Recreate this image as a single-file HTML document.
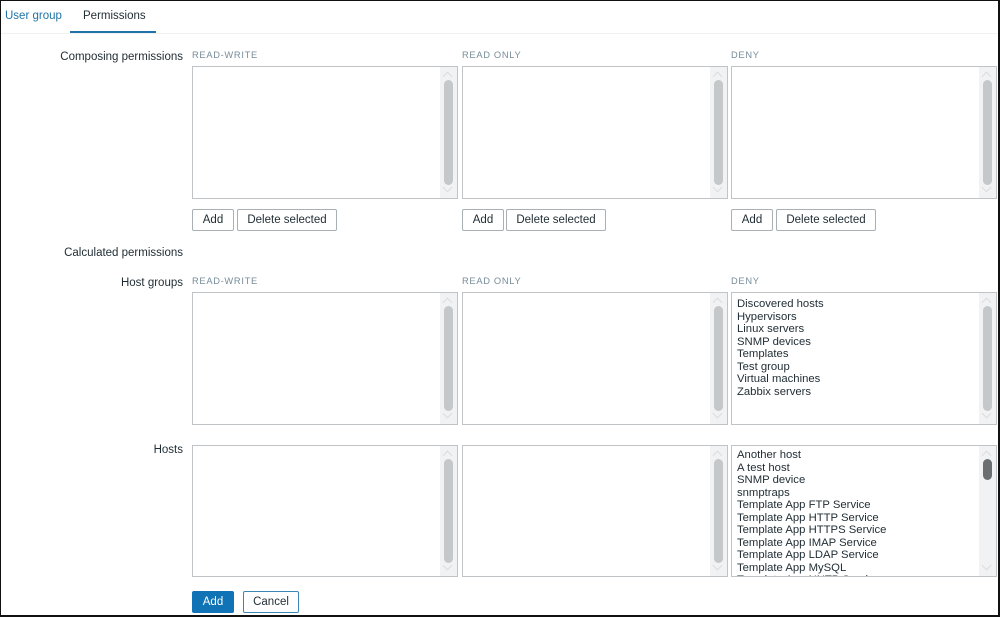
<!DOCTYPE html>
<html><head><meta charset="utf-8"><style>
*{box-sizing:border-box;margin:0;padding:0}
body{width:1000px;height:617px;background:#fff;font-family:"Liberation Sans",sans-serif;font-size:11.5px;color:#1f2c33;position:relative;overflow:hidden}
.frame{position:absolute;left:0;top:0;width:1000px;height:617px;border:1px solid #111;border-right:2px solid #111;border-bottom:2px solid #111}
.a{position:absolute}
.tab{top:10px;font-size:11.5px}
.lbl{right:817px;text-align:right;white-space:nowrap}
.hd{font-size:9.3px;color:#768d99;letter-spacing:.7px}
.box{position:absolute;width:266px;height:133px;border:1px solid #c0c4c7;background:#fff}
.box .tr{position:absolute;right:0;top:0;width:17px;height:100%;background:#f1f2f3}
.box .th{position:absolute;left:4px;top:13px;width:9px;bottom:13px;background:#c4c8cb;border-radius:5px}
.box .up,.box .dn{position:absolute;left:4px;width:7px;height:7px;border-left:1px solid #dadcde;border-top:1px solid #dadcde;transform:rotate(45deg)}
.box .up{top:6px}.box .dn{bottom:7px;transform:rotate(225deg)}
.box .items{position:absolute;left:5px;top:5px;line-height:12.5px;font-size:11.3px;color:#1f2c33;white-space:nowrap}
.btn{position:absolute;height:22px;border:1px solid #a9b0b4;border-radius:2px;background:#fff;font-size:11.5px;line-height:21px;text-align:center;color:#1f2c33}
</style></head><body>
<div class="a tab" style="left:5px;color:#1f73a8">User group</div>
<div class="a tab" style="left:83px">Permissions</div>
<div class="a" style="left:70px;top:31px;width:86px;height:2px;background:#1f73a8"></div>
<div class="a" style="left:0;top:33px;width:1000px;height:1px;background:#f0f1f2"></div>

<div class="a lbl" style="top:51px">Composing permissions</div>
<div class="a hd" style="left:192px;top:50px">READ-WRITE</div>
<div class="a hd" style="left:462px;top:50px">READ ONLY</div>
<div class="a hd" style="left:731px;top:50px">DENY</div>

<div class="box" style="left:192px;top:66px"><div class="tr"><div class="up"></div><div class="th"></div><div class="dn"></div></div></div>
<div class="box" style="left:462px;top:66px"><div class="tr"><div class="up"></div><div class="th"></div><div class="dn"></div></div></div>
<div class="box" style="left:731px;top:66px"><div class="tr"><div class="up"></div><div class="th"></div><div class="dn"></div></div></div>

<div class="btn" style="left:192px;top:209px;width:42px">Add</div>
<div class="btn" style="left:237px;top:209px;width:100px">Delete selected</div>
<div class="btn" style="left:462px;top:209px;width:42px">Add</div>
<div class="btn" style="left:506px;top:209px;width:100px">Delete selected</div>
<div class="btn" style="left:731px;top:209px;width:42px">Add</div>
<div class="btn" style="left:776px;top:209px;width:100px">Delete selected</div>

<div class="a lbl" style="top:247px">Calculated permissions</div>
<div class="a lbl" style="top:277px">Host groups</div>
<div class="a hd" style="left:192px;top:276px">READ-WRITE</div>
<div class="a hd" style="left:462px;top:276px">READ ONLY</div>
<div class="a hd" style="left:731px;top:276px">DENY</div>

<div class="box" style="left:192px;top:292px"><div class="tr"><div class="up"></div><div class="th"></div><div class="dn"></div></div></div>
<div class="box" style="left:462px;top:292px"><div class="tr"><div class="up"></div><div class="th"></div><div class="dn"></div></div></div>
<div class="box" style="left:731px;top:292px"><div class="items">Discovered hosts<br>Hypervisors<br>Linux servers<br>SNMP devices<br>Templates<br>Test group<br>Virtual machines<br>Zabbix servers</div><div class="tr"><div class="up"></div><div class="th"></div><div class="dn"></div></div></div>

<div class="a lbl" style="top:444px">Hosts</div>
<div class="box" style="left:192px;top:445px;height:132px"><div class="tr"><div class="up"></div><div class="th"></div><div class="dn"></div></div></div>
<div class="box" style="left:462px;top:445px;height:132px"><div class="tr"><div class="up"></div><div class="th"></div><div class="dn"></div></div></div>
<div class="box" style="left:731px;top:445px;height:132px;overflow:hidden"><div class="items" style="top:3px">Another host<br>A test host<br>SNMP device<br>snmptraps<br>Template App FTP Service<br>Template App HTTP Service<br>Template App HTTPS Service<br>Template App IMAP Service<br>Template App LDAP Service<br>Template App MySQL<br>Template App NNTP Service</div><div class="tr"><div class="up"></div><div class="th" style="bottom:auto;height:21px;background:#6b6f72"></div><div class="dn"></div></div></div>

<div class="btn" style="left:192px;top:591px;width:42px;background:#0f73b5;border-color:#0f73b5;color:#fff">Add</div>
<div class="btn" style="left:243px;top:591px;width:56px;border-color:#3b86b5">Cancel</div>
<div class="frame"></div>
</body></html>
